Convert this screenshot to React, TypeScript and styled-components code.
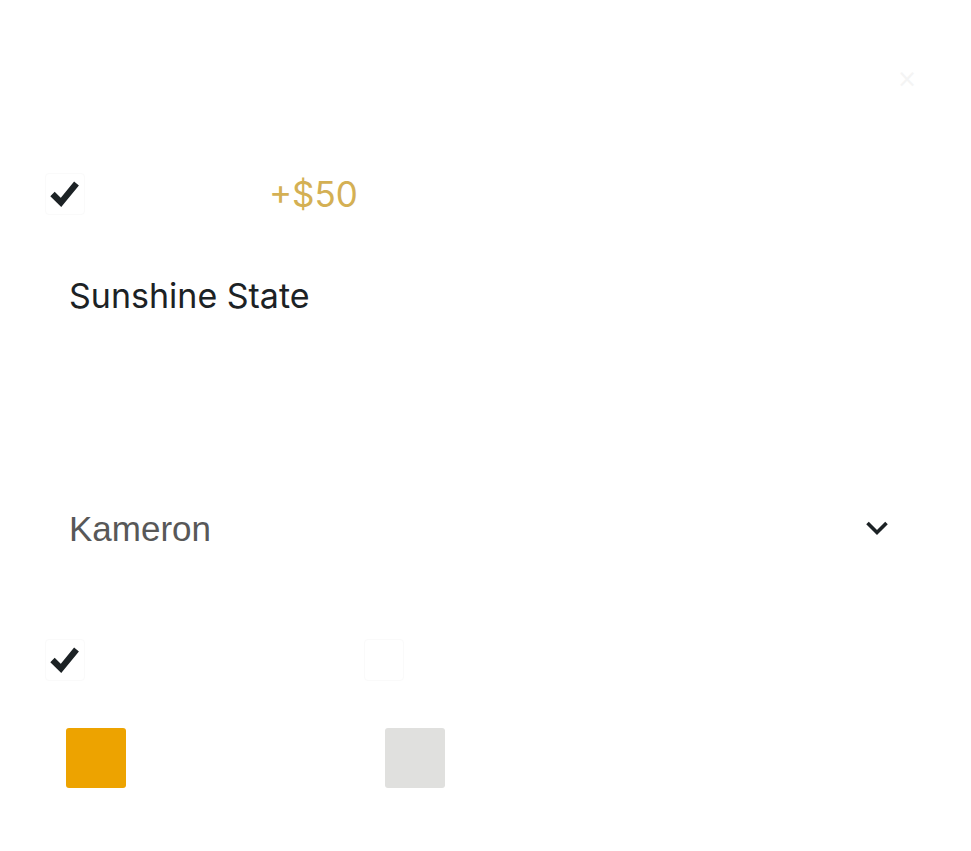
import React from "react";
import styled, { createGlobalStyle } from "styled-components";

const Global = createGlobalStyle`
  html, body { margin: 0; padding: 0; background: #ffffff; }
  body { font-family: Inter, "Noto Sans", sans-serif; }
  * { box-sizing: border-box; }
`;

const Page = styled.div`
  width: 971px;
  min-height: 851px;
  padding: 50px 45px 0 45px;
  display: flex;
  flex-direction: column;
  background: #ffffff;
`;

const Header = styled.div`
  height: 48px;
  display: flex;
  align-items: center;
  justify-content: space-between;
`;

const Title = styled.h2`
  margin: 0;
  padding-left: 4px;
  font-size: 30px;
  font-weight: 700;
  letter-spacing: 1px;
  color: #ffffff;
`;

const Close = styled.button`
  border: none;
  background: none;
  padding: 0;
  margin: 10px 7px 0 0;
  width: 24px;
  height: 24px;
  font-size: 24px;
  line-height: 24px;
  color: #f4f4f4;
  font-family: "DejaVu Sans", sans-serif;
`;

const CheckRow = styled.label<{ $mt: number }>`
  display: flex;
  align-items: center;
  margin-top: ${(p) => p.$mt}px;
  height: 42px;
`;

const Box = styled.span`
  width: 40px;
  height: 42px;
  border: 1px solid #fafafa;
  border-radius: 4px;
  display: flex;
  align-items: center;
  justify-content: center;
  flex-shrink: 0;
`;

const Label = styled.span`
  margin-left: 27px;
  font-size: 32px;
  color: #ffffff;
`;

const Price = styled.span`
  margin-left: 30px;
  font-size: 35px;
  color: #d4b054;
`;

const TextInput = styled.div`
  margin-top: 58px;
  height: 44px;
  padding-left: 24px;
  display: flex;
  align-items: center;
  font-size: 34px;
  color: #1c2225;
`;

const FieldLabel = styled.div`
  margin-top: 86px;
  height: 40px;
  display: flex;
  align-items: center;
  font-size: 32px;
  color: #ffffff;
`;

const Select = styled.div`
  margin-top: 64px;
  height: 44px;
  padding: 0 37px 0 24px;
  display: flex;
  align-items: center;
  justify-content: space-between;
  font-family: "Liberation Sans", Arial, sans-serif;
  font-size: 35px;
  color: #585858;
`;

const Columns = styled.div`
  display: grid;
  grid-template-columns: 319px 1fr;
`;

const Column = styled.div`
  display: flex;
  flex-direction: column;
`;

const SwatchRow = styled.div`
  margin-top: 47px;
  padding-left: 21px;
  display: flex;
  align-items: center;
`;

const Swatch = styled.span<{ $color: string }>`
  width: 60px;
  height: 60px;
  border-radius: 3px;
  background: ${(p) => p.$color};
`;

const Hex = styled.span`
  margin-left: 42px;
  font-size: 30px;
  color: #ffffff;
`;

const Check = () => (
  <svg width="30" height="28" viewBox="0 0 30 28">
    <polyline
      points="2.5,14 11,22.5 26.5,3.5"
      fill="none"
      stroke="#1c2225"
      strokeWidth="6.2"
      strokeLinejoin="miter"
    />
  </svg>
);

const Chevron = () => (
  <svg width="24" height="18" viewBox="0 0 24 18">
    <polyline
      points="2.5,3 12,12.5 21.5,3"
      fill="none"
      stroke="#1c2225"
      strokeWidth="3.6"
    />
  </svg>
);

export default function App() {
  return (
    <>
      <Global />
      <Page>
        <Header>
          <Title>ADD TEXT</Title>
          <Close>×</Close>
        </Header>

        <CheckRow $mt={75}>
          <Box>
            <Check />
          </Box>
          <Label>Add text</Label>
          <Price>+$50</Price>
        </CheckRow>

        <TextInput>Sunshine State</TextInput>

        <FieldLabel>Select font</FieldLabel>

        <Select>
          <span>Kameron</span>
          <Chevron />
        </Select>

        <Columns>
          <Column>
            <CheckRow $mt={88}>
              <Box>
                <Check />
              </Box>
              <Label>Text color</Label>
            </CheckRow>
            <SwatchRow>
              <Swatch $color="#eda300" />
              <Hex>#EDA300</Hex>
            </SwatchRow>
          </Column>
          <Column>
            <CheckRow $mt={88}>
              <Box />
              <Label>Stroke color</Label>
            </CheckRow>
            <SwatchRow>
              <Swatch $color="#e0e0de" />
            </SwatchRow>
          </Column>
        </Columns>
      </Page>
    </>
  );
}
